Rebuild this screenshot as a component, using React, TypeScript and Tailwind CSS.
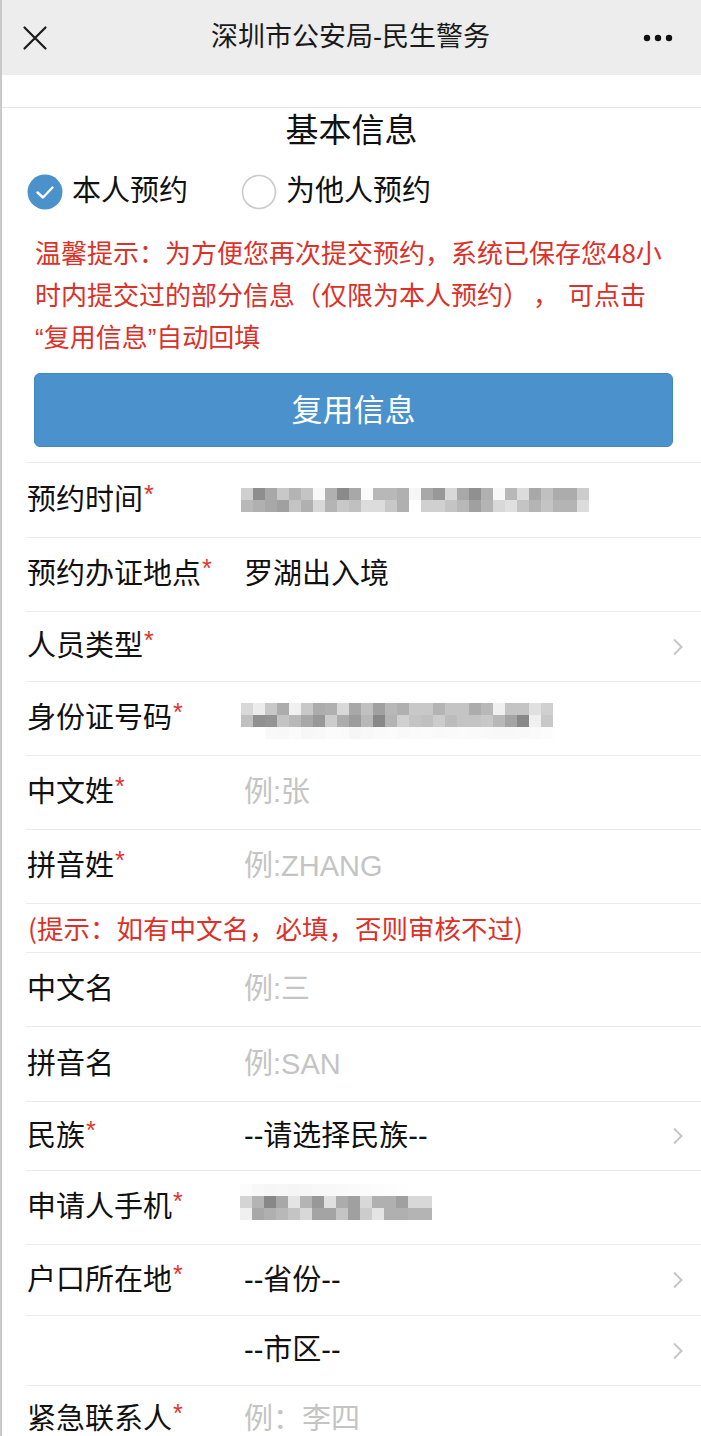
import React from "react";

const FONT = '"Liberation Sans", "Noto Sans CJK SC", sans-serif';
const CJK_FONT = '"Noto Sans CJK SC", "Liberation Sans", sans-serif';

type MosaicProps = { rows: string[][]; cell?: number; className?: string };
function Mosaic({ rows, cell = 12, className }: MosaicProps) {
  const w = Math.max(...rows.map((r) => r.length)) * cell;
  const h = rows.length * cell;
  return (
    <svg width={w} height={h} viewBox={`0 0 ${w} ${h}`} className={className}>
      {rows.map((r, ri) =>
        r.map((c, ci) => (
          <rect key={`${ri}-${ci}`} x={ci * cell} y={ri * cell} width={cell} height={cell} fill={`#${c}${c}${c}`} />
        ))
      )}
    </svg>
  );
}

const g = (s: string) => s.split(" ");

const timeMosaic = [
  g("cf 8e a8 c8 b4 c4 f8 b0 8a a8 fa b8 b8 b0 f6 a8 98 d8 a8 90 b0 f8 b8 dc a8 c0 ac ac cc"),
  g("b8 b0 a8 a0 c4 b0 d8 b4 c8 c0 dc dc c8 b0 ff d0 d0 c4 b8 a0 b4 d8 e0 c4 b4 c4 b4 b4 dc"),
];
const idMosaic = [
  g("d8 ec c8 ac f0 c8 ac b0 d8 a8 c0 a0 b8 b0 c8 c8 b4 c4 c4 ac b8 f0 c4 c4 e0 d0"),
  g("c0 90 94 c4 b8 a8 98 cc ac 9c b8 88 b4 d0 c4 c0 cc bc c4 c4 c8 b8 a4 88 f0 c8"),
  g("ff ff f9 f8 fb f7 f8 fb fa f6 f8 fa fb f9 fa fb f9 fa fb fa f9 f8 f8 f9 fa fc"),
];
const phoneMosaic = [
  g("fc f8 f6 f7 f5 f6 f8 f8 f9 fa fb fc fd fe ff ff"),
  g("d4 b4 88 a8 e4 b4 98 e0 ac a0 d8 b0 b0 a0 d8 d8"),
  g("f0 a8 b0 b8 c4 d8 a4 a4 c4 a0 cc e4 b0 b0 b4 b4"),
];

function Chevron() {
  return (
    <svg width="12" height="18" viewBox="0 0 12 18" className="shrink-0">
      <polyline points="2,1.5 9.5,9 2,16.5" fill="none" stroke="#c6c6c6" strokeWidth="2" />
    </svg>
  );
}

function Star() {
  return <span className="text-[#e0342c] text-[25px] leading-none relative -top-[4px] ml-[1px]">*</span>;
}

type RowProps = {
  label?: string;
  required?: boolean;
  h: string;
  chevron?: boolean;
  extra?: string;
  children?: React.ReactNode;
};
function Row({ label, required, h, chevron, extra = "", children }: RowProps) {
  return (
    <div className={`flex items-center border-t border-[#ebebeb] ${h} pr-[17px] ${extra}`}>
      <div className="w-[216px] shrink-0 pl-[1px] text-[29px] leading-none text-[#111] flex items-start whitespace-nowrap">
        {label}
        {label && required ? <Star /> : null}
      </div>
      <div className="flex-1 flex items-center text-[29px] leading-none whitespace-nowrap">{children}</div>
      {chevron ? <Chevron /> : null}
    </div>
  );
}

function Placeholder({ children }: { children: React.ReactNode }) {
  return <span className="text-[#c4c4c4] pl-[2px]">{children}</span>;
}

function Value({ children }: { children: React.ReactNode }) {
  return <span className="text-[#111] pl-[2px]">{children}</span>;
}

export default function App() {
  return (
    <div className="w-[701px] h-[1436px] overflow-hidden bg-white border-l-2 border-[#c9c9c9]" style={{ fontFamily: FONT }}>
      {/* Header */}
      <div className="h-[75px] bg-[#ededed] flex items-center justify-between px-[20px]">
        <svg width="26" height="26" viewBox="0 0 26 26">
          <path d="M2.5 2.5 L23.5 23.5 M23.5 2.5 L2.5 23.5" stroke="#1a1a1a" strokeWidth="2.2" strokeLinecap="round" />
        </svg>
        <div className="text-[27px] text-[#1a1a1a] leading-none pl-[10px]">深圳市公安局-民生警务</div>
        <svg width="32" height="8" viewBox="0 0 32 8" className="mr-[6px]">
          <circle cx="4" cy="4" r="3.2" fill="#111" />
          <circle cx="15" cy="4" r="3.2" fill="#111" />
          <circle cx="26" cy="4" r="3.2" fill="#111" />
        </svg>
      </div>
      <div className="h-[33px] border-b border-[#e6e6e6]" />

      {/* Title */}
      <div className="h-[44px] flex items-center justify-center text-[33px] leading-none text-[#111]">基本信息</div>

      {/* Radio */}
      <div className="h-[79px] flex items-center pl-[25px]">
        <div className="flex items-center">
          <svg width="36" height="36" viewBox="0 0 36 36">
            <circle cx="18" cy="18" r="17.5" fill="#4b91cb" />
            <polyline points="10.5,18.5 16,23.5 25.5,13.5" fill="none" stroke="#fff" strokeWidth="2.4" strokeLinecap="round" strokeLinejoin="round" />
          </svg>
          <span className="ml-[9px] text-[29px] leading-none text-[#111]">本人预约</span>
        </div>
        <div className="flex items-center ml-[53px]">
          <svg width="36" height="36" viewBox="0 0 36 36">
            <circle cx="18" cy="18" r="16.5" fill="#fff" stroke="#cacaca" strokeWidth="1.6" />
          </svg>
          <span className="ml-[9px] text-[29px] leading-none text-[#111]">为他人预约</span>
        </div>
      </div>

      {/* Red hint */}
      <div className="pl-[33px] text-[26px] leading-[42px] text-[#dc3129] whitespace-nowrap" style={{ fontFamily: CJK_FONT }}>
        <div className="h-[42px]">温馨提示：为方便您再次提交预约，系统已保存您48小</div>
        <div className="h-[42px]">
          时内提交过的部分信息（仅限为本人预约）<span className="inline-block w-[4px] leading-none" />，<span className="inline-block w-[9px] leading-none" />可点击
        </div>
        <div className="h-[42px]">
          <span className="leading-none" style={{ fontFamily: FONT }}>“</span>复用信息<span className="leading-none" style={{ fontFamily: FONT }}>”</span>自动回填
        </div>
      </div>

      {/* Button */}
      <div className="pl-[32px] pr-[28px] mt-[16px]">
        <div className="h-[74px] rounded-[6px] bg-[#4b92cc] border border-[#4286bf] flex items-center justify-center text-white text-[31px] leading-none">
          复用信息
        </div>
      </div>

      {/* Form */}
      <div className="ml-[24px] mt-[15px]">
        <Row label="预约时间" required h="h-[75px]">
          <Mosaic rows={timeMosaic} className="ml-[-1px]" />
        </Row>
        <Row label="预约办证地点" required h="h-[74px]">
          <Value>罗湖出入境</Value>
        </Row>
        <Row label="人员类型" required h="h-[70px]" chevron />
        <Row label="身份证号码" required h="h-[74px]">
          <Mosaic rows={idMosaic} className="ml-[-1px] mt-[4px]" />
        </Row>
        <Row label="中文姓" required h="h-[74px]">
          <Placeholder>例:张</Placeholder>
        </Row>
        <Row label="拼音姓" required h="h-[74px]">
          <Placeholder>例:ZHANG</Placeholder>
        </Row>
        <div
          className="h-[49px] border-t border-[#ebebeb] flex items-center pl-[2px] text-[26.5px] leading-none text-[#dc3129] whitespace-nowrap"
          style={{ fontFamily: CJK_FONT }}
        >
          (提示：如有中文名，必填，否则审核不过)
        </div>
        <Row h="h-[74px]" label="中文名">
          <Placeholder>例:三</Placeholder>
        </Row>
        <Row h="h-[75px]" label="拼音名">
          <Placeholder>例:SAN</Placeholder>
        </Row>
        <Row label="民族" required h="h-[69px]" chevron>
          <Value>--请选择民族--</Value>
        </Row>
        <Row label="申请人手机" required h="h-[74px]">
          <Mosaic rows={phoneMosaic} className="ml-[-2px] mt-[-12px]" />
        </Row>
        <Row label="户口所在地" required h="h-[71px]" chevron>
          <Value>--省份--</Value>
        </Row>
        <Row h="h-[70px]" chevron>
          <Value>--市区--</Value>
        </Row>
        <Row label="紧急联系人" required h="h-[51px]" extra="pt-[17px]">
          <Placeholder>例：李四</Placeholder>
        </Row>
      </div>
    </div>
  );
}
